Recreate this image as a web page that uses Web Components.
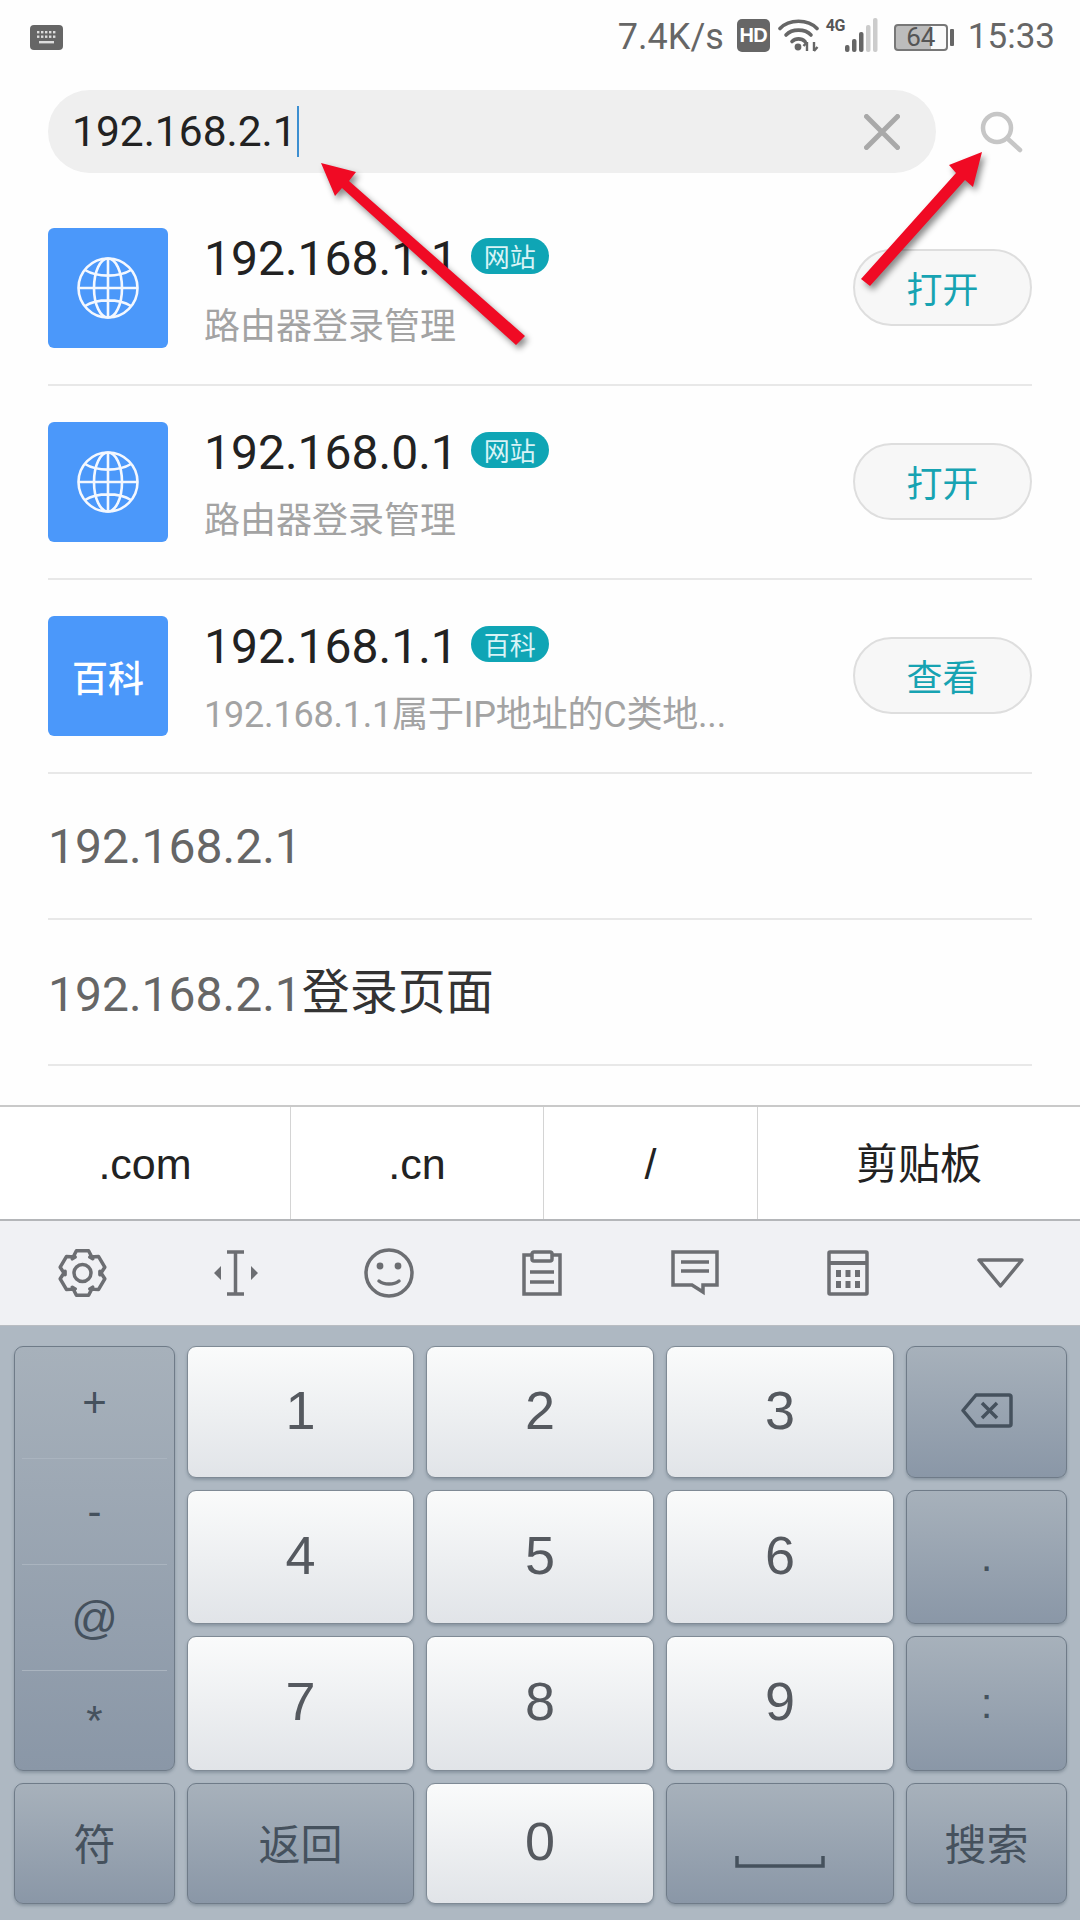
<!DOCTYPE html>
<html lang="zh"><head><meta charset="utf-8"><title>搜索</title>
<style>
html,body{margin:0;padding:0;width:1080px;height:1920px;overflow:hidden;background:#fefefe}
body{font-family:Roboto,"Noto Sans CJK SC",sans-serif;position:relative}
x-app{display:block;width:1080px;height:1920px}
</style></head><body>
<x-app>
  <x-status></x-status>
  <x-search>192.168.2.1</x-search>
  <x-list>
    <x-result badge="网站" action="打开"><x-globe slot="icon"></x-globe><span slot="title">192.168.1.1</span><span slot="sub">路由器登录管理</span></x-result>
    <x-result badge="网站" action="打开"><x-globe slot="icon"></x-globe><span slot="title">192.168.0.1</span><span slot="sub">路由器登录管理</span></x-result>
    <x-result badge="百科" action="查看"><span slot="icon">百科</span><span slot="title">192.168.1.1</span><span slot="sub" style="letter-spacing:-.2px">192.168.1.1属于IP地址的C类地...</span></x-result>
    <x-plain>192.168.2.1</x-plain>
    <x-plain><span style="vertical-align:-1px">192.168.2.1</span><span style="color:#333;vertical-align:.5px">登录页面</span></x-plain>
  </x-list>
  <x-suggest></x-suggest>
  <x-tools></x-tools>
  <x-keyboard></x-keyboard>
  <x-arrows></x-arrows>
</x-app>
<script>
const def=(name,html,setup)=>customElements.define(name,class extends HTMLElement{
  constructor(){super();const t=document.createElement('template');t.innerHTML=typeof html==='function'?html():html;this.attachShadow({mode:'open'}).appendChild(t.content);}
  connectedCallback(){if(setup)setup(this,this.shadowRoot);}
});

def('x-status',`<style>
:host{display:flex;align-items:center;height:72px;padding:2px 25px 0 30px;box-sizing:border-box;color:#666;font:35px/70px Roboto,sans-serif}
.r{margin-left:auto;display:flex;align-items:center}
svg{display:block;flex:none}
.s{font-size:36px}
.hd{width:33px;height:33px;background:#666;border-radius:5px;color:#fff;font:bold 20px/33px "Liberation Sans",sans-serif;text-align:center;margin:0 8px 4px 13px;letter-spacing:-.5px}
.sig{position:relative;width:53px;height:34px;margin:0 0 4px 7px}
.g{position:absolute;left:0;top:-1px;font:700 16px/18px Roboto,sans-serif;letter-spacing:-.6px;color:#555}
.bat{position:relative;width:54px;height:27px;box-sizing:border-box;border:2px solid #777;border-radius:4px;margin:0 2px 0 15px;font:26px/23px Roboto,sans-serif;color:#555;text-align:center;background:linear-gradient(90deg,#bcbcbc 70%,#fafafa 70%)}
.nub{width:4px;height:17px;background:#666;border-radius:1px;margin-right:14px}
</style>
<svg width="33" height="25" viewBox="0 0 33 25"><rect width="33" height="25" rx="4" fill="#666"/><g fill="#ddd"><rect x="7" y="6" width="2.4" height="2.4"/><rect x="11" y="6" width="2.4" height="2.4"/><rect x="15" y="6" width="2.4" height="2.4"/><rect x="19" y="6" width="2.4" height="2.4"/><rect x="23" y="6" width="2.4" height="2.4"/><rect x="7" y="10.5" width="2.4" height="2.4"/><rect x="11" y="10.5" width="2.4" height="2.4"/><rect x="15" y="10.5" width="2.4" height="2.4"/><rect x="19" y="10.5" width="2.4" height="2.4"/><rect x="23" y="10.5" width="2.4" height="2.4"/><rect x="9" y="16" width="15" height="2.4"/></g></svg>
<div class="r"><span class="s">7.4K/s</span><div class="hd">HD</div>
<svg width="41" height="34" viewBox="0 0 41 34" style="margin-bottom:4px"><g fill="none" stroke="#666" stroke-width="3.6" stroke-linecap="round"><path d="M2 10.500C11 .8 30 .8 39 10.500"/><path d="M8 17C14 10.500 27 10.500 33 17"/><path d="M14 23.500C17.500 20 23.500 20 27 23.500"/></g><circle cx="20" cy="29" r="3.400" fill="#666"/><path d="M29 33V24M29 24l-3.500 4M36 24v9M36 33l3.500-4" stroke="#666" stroke-width="2.400" fill="none"/></svg>
<div class="sig"><span class="g">4G</span><svg width="53" height="34" viewBox="0 0 53 34"><g fill="#666"><rect x="19" y="27" width="4.500" height="7" rx="2"/><rect x="26" y="21" width="4.500" height="13" rx="2"/><rect x="33" y="14" width="4.500" height="20" rx="2"/></g><g fill="#ccc"><rect x="40" y="7" width="4.500" height="27" rx="2"/><rect x="47" y="0" width="4.500" height="34" rx="2"/></g></svg></div>
<div class="bat">64</div><div class="nub"></div><span>15:33</span></div>`);

def('x-search',`<style>
:host{display:flex;align-items:center;height:120px;padding:18px 57px 19px 48px;box-sizing:border-box}
.pill{flex:none;width:888px;height:83px;border-radius:42px;background:#efefef;display:flex;align-items:center;padding:0 36px 0 24px;box-sizing:border-box;color:#222;font-size:42.5px}
.caret{width:2px;height:51px;background:#3d8fd1;margin-left:0}
.x{margin-left:auto}
.s{margin-left:auto}
svg{display:block}
</style>
<div class="pill"><slot></slot><span class="caret"></span>
<svg class="x" width="36" height="36" viewBox="0 0 36 36"><path d="M2.500 2.500l31 31M33.500 2.500l-31 31" stroke="#a9a9a9" stroke-width="5" stroke-linecap="round"/></svg></div>
<svg class="s" width="44" height="42" viewBox="0 0 44 42"><circle cx="18" cy="17" r="14" fill="none" stroke="#c6c6c6" stroke-width="4.500"/><path d="M29 28l12 11" stroke="#c6c6c6" stroke-width="4.500" stroke-linecap="round"/></svg>`);

def('x-list',`<style>:host{display:block;margin-bottom:39px}</style><slot></slot>`);

def('x-globe',`<style>:host{display:block;width:62px;height:62px}svg{display:block}</style>
<svg width="62" height="62" viewBox="0 0 62 62" fill="none" stroke="#f4f8ff" stroke-width="2.600"><circle cx="31" cy="31" r="29.500"/><ellipse cx="31" cy="31" rx="14" ry="29.500"/><path d="M31 1.500v59M1.500 31h59M8 13c12 7.500 34 7.500 46 0M8 49c12-7.500 34-7.500 46 0"/></svg>`);

def('x-result',()=>`<style>
:host{display:flex;align-items:center;height:194px;margin:0 48px;box-sizing:border-box;border-bottom:2px solid #e8e8e8}
.ic{width:120px;height:120px;flex:none;border-radius:6px;background:#4b98fa;color:#fff;display:flex;align-items:center;justify-content:center;font:500 36px/1 "Noto Sans CJK SC",sans-serif}
.tx{flex:1;min-width:0;margin-left:36px}
.ti{display:flex;align-items:center;height:56px;font-size:48px;color:#222;line-height:56px;margin-top:5.5px}
.bd{margin-left:13px;width:78px;height:36px;border-radius:18px;background:#0fa5b5;color:#d8f3f6;font:26px/36px "Noto Sans CJK SC",sans-serif;text-align:center;margin-top:-4.6px}
.su{margin-top:16.5px;height:48px;line-height:48px;font-size:36px;color:#a3a3a3;white-space:nowrap}
.bt{flex:none;width:179px;height:77px;box-sizing:border-box;border:2px solid #dedede;border-radius:39px;background:#f7f7f7;color:#17a3b2;font:36px/73px "Noto Sans CJK SC",sans-serif;text-align:center;margin-bottom:2px}
</style>
<div class="ic"><slot name="icon"></slot></div>
<div class="tx"><div class="ti"><slot name="title"></slot><span class="bd"></span></div><div class="su"><slot name="sub"></slot></div></div>
<div class="bt"></div>`,(el,sr)=>{sr.querySelector('.bd').textContent=el.getAttribute('badge');sr.querySelector('.bt').textContent=el.getAttribute('action');});

def('x-plain',`<style>
:host{display:block;height:146px;margin:0 48px;box-sizing:border-box;border-bottom:2px solid #e8e8e8;font-size:48px;line-height:146px;color:#666}
</style><slot></slot>`);

def('x-suggest',`<style>
:host{display:grid;grid-template-columns:291px 253px 214px 322px;height:114px;box-sizing:border-box;border-top:2px solid #c9c9c9;background:#fff}
div{display:flex;align-items:center;justify-content:center;border-right:1px solid #d4d4d4;color:#222;font:43px "Liberation Sans","Noto Sans CJK SC",sans-serif;padding-top:2px;box-sizing:border-box}
div:last-child{border:0;font-size:42px;padding:0 0 6px}
</style><div>.com</div><div>.cn</div><div>/</div><div>剪贴板</div>`);

def('x-tools',(()=>{
  let g='M';const cx=24.5,cy=25,pts=[];
  for(let i=0;i<6;i++){const a=(i*60-90)*Math.PI/180;
    const p=(r,d)=>{const b=a+d;return (cx+r*Math.cos(b)).toFixed(1)+' '+(cy+r*Math.sin(b)).toFixed(1)};
    pts.push(p(17.5,-.62),p(23,-.27),p(23,.27),p(17.5,.62));}
  g+=pts.join('L')+'Z';
  return `<style>
:host{display:grid;grid-template-columns:repeat(7,153px);height:107px;padding-left:6px;box-sizing:border-box;background:#f0f1f4;border-top:2px solid #b4b6b9;border-bottom:1px solid #b9bdc2;align-items:center;justify-items:center}
svg{display:block;fill:none;stroke:#6c6e72;stroke-width:3.5}
</style>
<svg width="49" height="50" viewBox="0 0 49 50"><path d="${g}" stroke-linejoin="round"/><circle cx="24.5" cy="25" r="8.5"/></svg>
<svg width="44" height="46" viewBox="0 0 44 46"><path d="M13 2h17M21.500 2v42M13 44h17"/><path d="M0 23l7-7v14zM44 23l-7-7v14z" fill="#6c6e72" stroke="none"/></svg>
<svg width="50" height="50" viewBox="0 0 50 50"><circle cx="25" cy="25" r="23"/><circle cx="16" cy="18" r="3.400" fill="#6c6e72" stroke="none"/><circle cx="34" cy="18" r="3.400" fill="#6c6e72" stroke="none"/><path d="M15 33c5 4 15 4 20 0" stroke-linecap="round"/></svg>
<svg width="40" height="46" viewBox="0 0 40 46"><path d="M9 5H2v39h36V5h-7"/><rect x="10" y="2" width="20" height="9" rx="2"/><path d="M8 22h24M8 32h24"/></svg>
<svg width="48" height="46" viewBox="0 0 48 46"><path d="M2 2h44v33H32v7l-11-7H2z"/><path d="M10 12h28M10 21h28"/></svg>
<svg width="42" height="46" viewBox="0 0 42 46"><rect x="2" y="2" width="38" height="42" rx="1"/><path d="M2 13h38" stroke-width="4"/><g fill="#6c6e72" stroke="none"><rect x="9" y="20" width="5" height="7"/><rect x="18.500" y="20" width="5" height="7"/><rect x="28" y="20" width="5" height="7"/><rect x="9" y="31" width="5" height="7"/><rect x="18.500" y="31" width="5" height="7"/><rect x="28" y="31" width="5" height="7"/></g></svg>
<svg width="47" height="31" viewBox="0 0 47 31"><path d="M2 2h43L23.500 28z" stroke-linejoin="round"/></svg>`;
})());

def('x-key',`<style>
:host{display:flex;align-items:center;justify-content:center;box-sizing:border-box;border-radius:9px;border:1px solid #6f7b88;box-shadow:0 2px 3px rgba(70,85,100,.35);background:linear-gradient(#a7b1bb,#8a97a7);color:#45515d;font:42px "Liberation Sans","Noto Sans CJK SC",sans-serif}
:host([light]){background:linear-gradient(#fafbfb,#e1e4e8);color:#55595f;font-size:54px;border-color:#7f8a95;padding-bottom:5px}
:host([low]){padding-bottom:4px}
:host([tall]){grid-row:span 3;display:grid;grid-template-columns:1fr;grid-template-rows:111px 106px 106px 1fr;align-items:stretch;justify-content:stretch}
</style><slot></slot>`);

def('x-cell',`<style>
:host{display:flex;align-items:center;justify-content:center;margin:0 7px;border-top:1px solid #aab4bf}
:host(:first-child){border-top:0}
</style><slot></slot>`);

def('x-keyboard',`<style>
:host{display:grid;grid-template-columns:161px 227px 228px 228px 161px;grid-template-rows:132px 134px 135px 121px;gap:12px;height:594px;padding:20px 0 0 14px;box-sizing:border-box;background:#aeb8c2}
svg{display:block}
</style>
<x-key tall><x-cell>+</x-cell><x-cell>-</x-cell><x-cell><span style="font-size:46px">@</span></x-cell><x-cell>*</x-cell></x-key>
<x-key light>1</x-key><x-key light>2</x-key><x-key light>3</x-key>
<x-key><svg width="52" height="35" viewBox="0 0 52 35" fill="none" stroke="#45515d" stroke-width="3.500" style="margin-bottom:3px"><path d="M15 2h33a2 2 0 0 1 2 2v27a2 2 0 0 1-2 2H15L2 17.500z" stroke-linejoin="round"/><path d="M21 10l15 15M36 10L21 25"/></svg></x-key>
<x-key light>4</x-key><x-key light>5</x-key><x-key light>6</x-key><x-key>.</x-key>
<x-key light>7</x-key><x-key light>8</x-key><x-key light>9</x-key><x-key>:</x-key>
<x-key low>符</x-key><x-key low>返回</x-key><x-key light>0</x-key>
<x-key><svg width="90" height="12" viewBox="0 0 90 12" fill="none" stroke="#45515d" stroke-width="3.500" style="margin-top:36px"><path d="M2 0v10h86V0"/></svg></x-key>
<x-key low>搜索</x-key>`);

def('x-arrows',`<style>
:host{position:absolute;left:0;top:0;width:1080px;height:1920px;pointer-events:none}
svg{position:absolute;left:0;top:0;filter:drop-shadow(3px 4px 3px rgba(0,0,0,.45))}
</style>
<svg width="1080" height="400" viewBox="0 0 1080 400"><path fill="#f00a24" d="M321 163L356 172L349 181L525 336L516 345L342 188L335 196Z"/><path fill="#f00a24" d="M982 152L949 165L956 173L861 279L870 286L965 180L973 187Z"/></svg>`);

def('x-app',`<style>:host{display:block}</style><slot></slot>`);
</script>
</body></html>
